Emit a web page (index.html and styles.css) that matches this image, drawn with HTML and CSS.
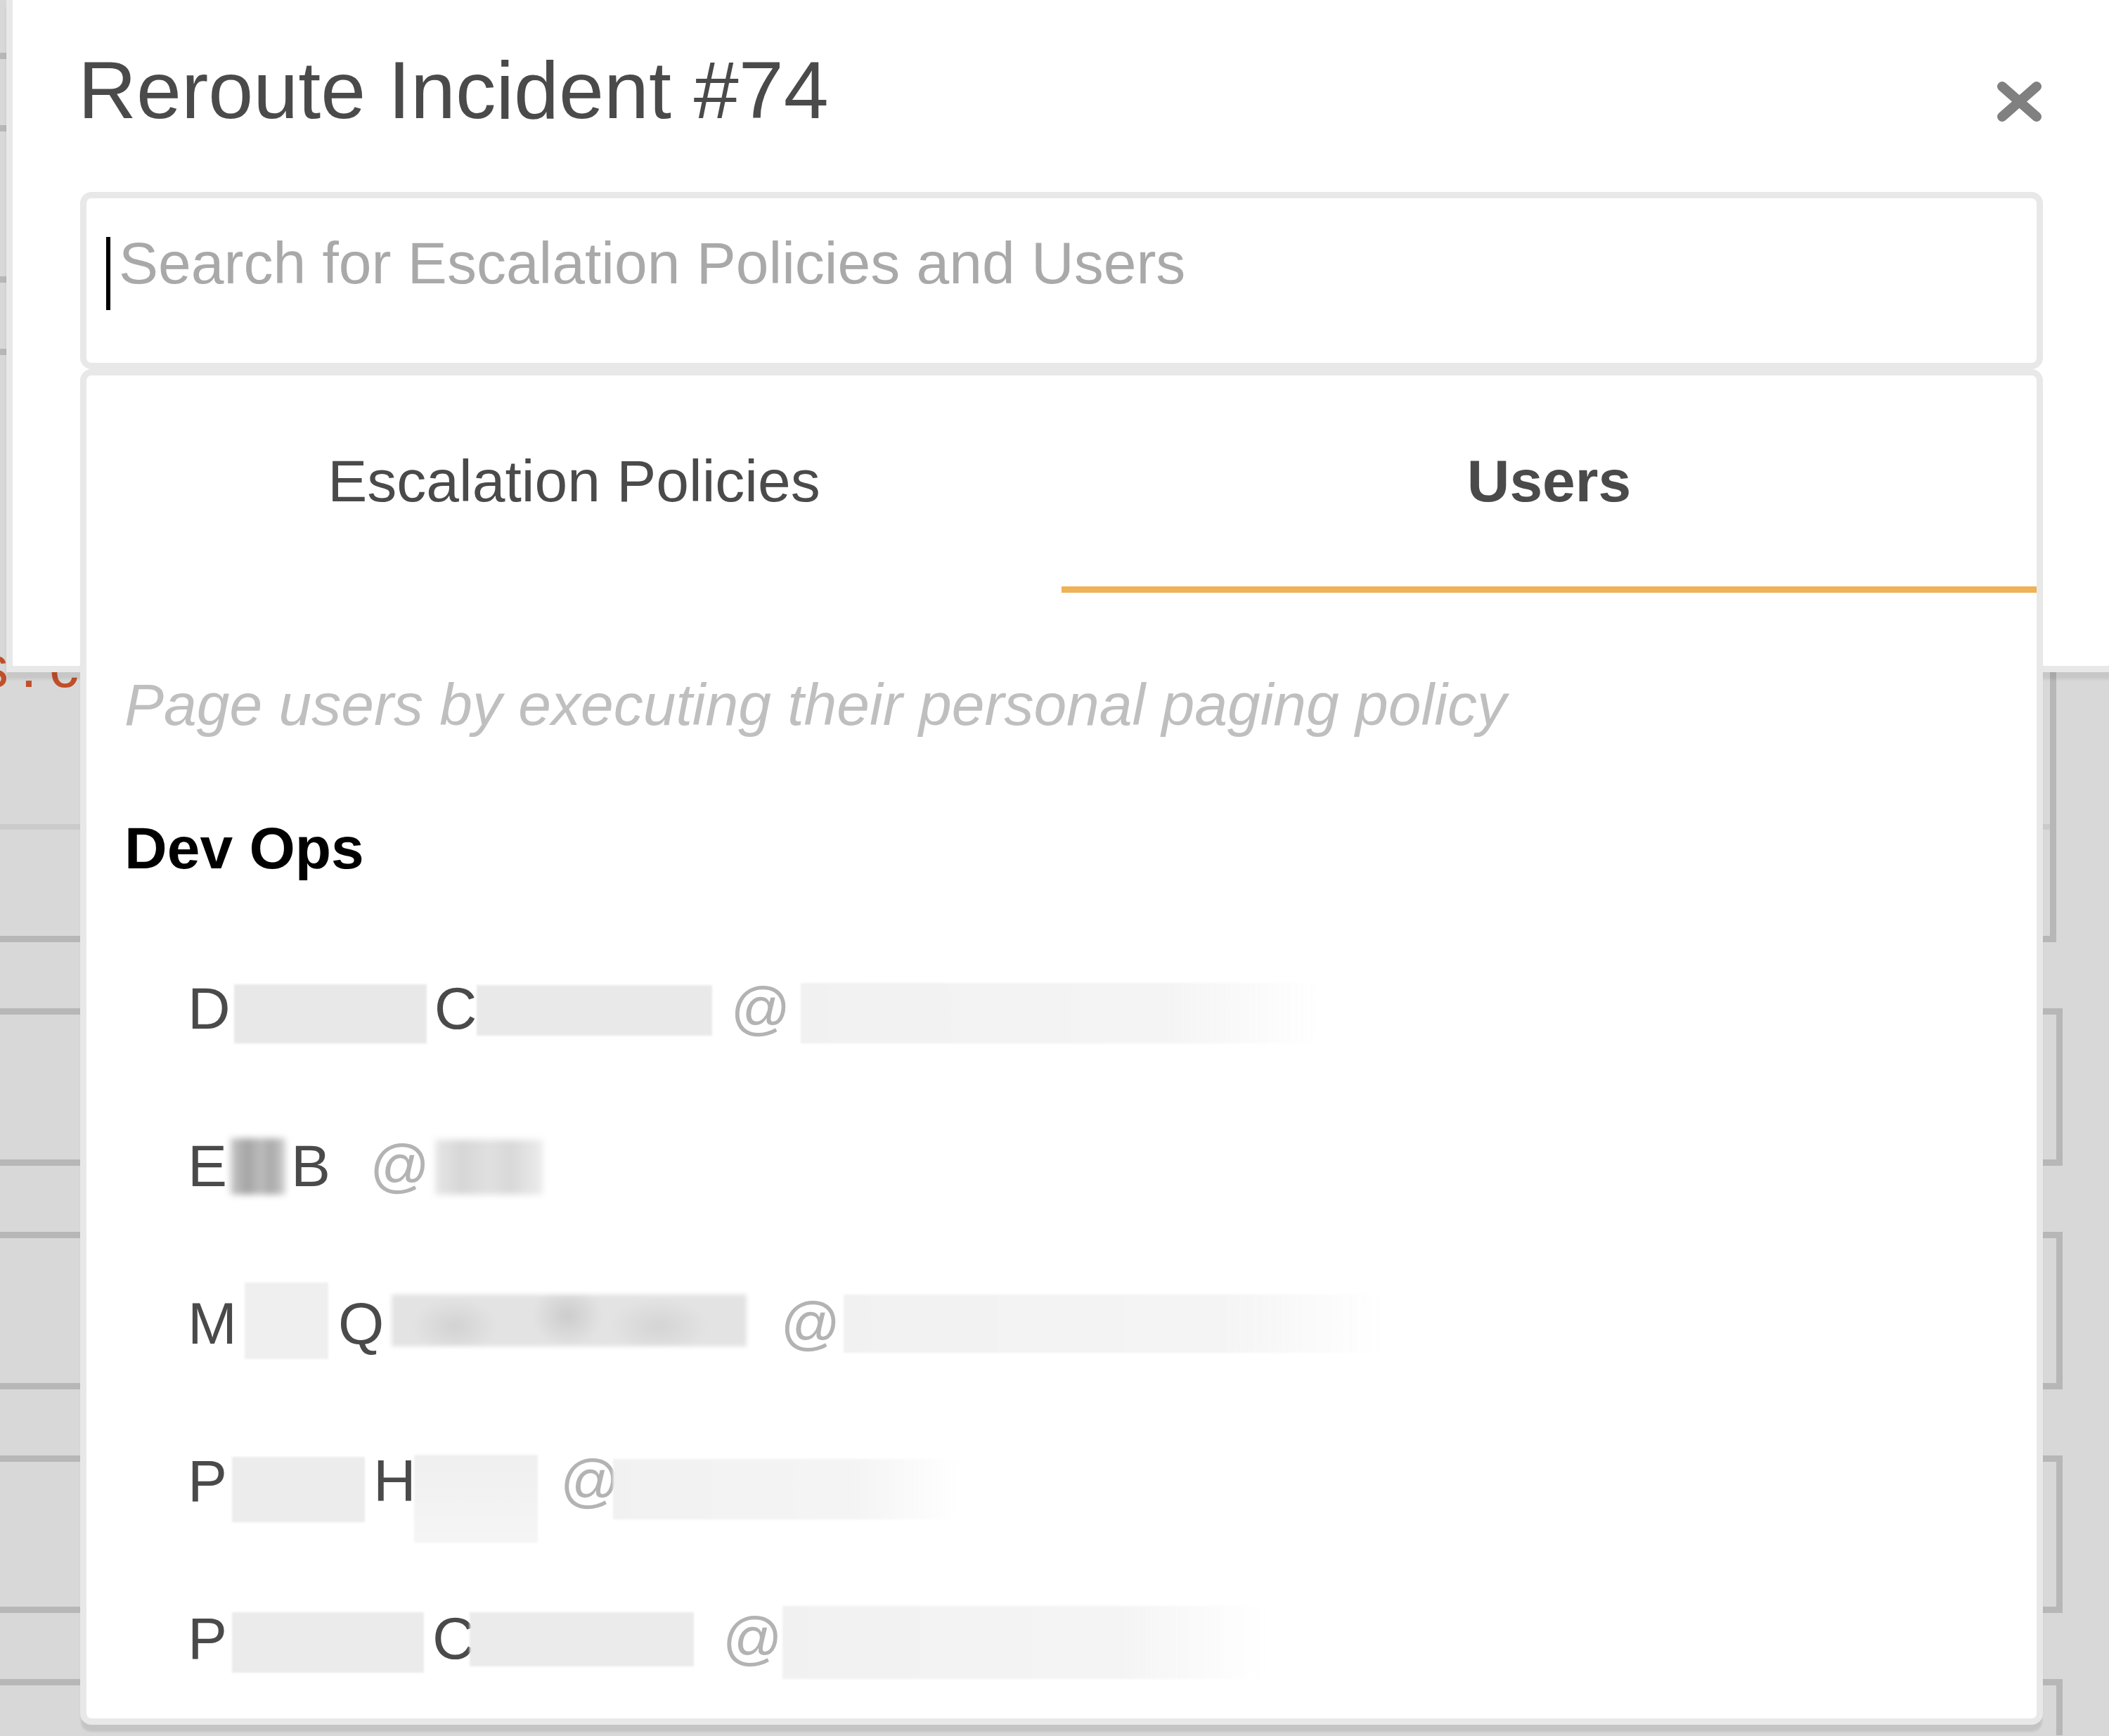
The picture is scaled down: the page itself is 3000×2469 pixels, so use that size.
FILE: index.html
```html
<!DOCTYPE html>
<html lang="en">
<head>
<meta charset="utf-8">
<title>Reroute Incident #74</title>
<link rel="stylesheet" href="styles.css">
</head>
<body>
<div class="bg">
  <div class="card c0"></div>
  <div class="card"></div>
  <div class="card tall">
    <div class="bgtext">s . c</div>
    <div class="divider"></div>
  </div>
  <div class="card"></div>
  <div class="card"></div>
  <div class="card"></div>
  <div class="card last"></div>
</div>

<div class="modal">
  <div class="header">
    <h1 class="title">Reroute Incident #74</h1>
    <svg class="close" width="67" height="59" viewBox="0 0 67 59" aria-label="Close">
      <path d="M9 8 L58 51 M58 8 L9 51" stroke="#808080" stroke-width="14" stroke-linecap="round" fill="none"/>
    </svg>
  </div>
  <div class="search">
    <div class="input"><span class="caret"></span><span class="placeholder">Search for Escalation Policies and Users</span></div>
    <div class="panel">
      <div class="tabs">
        <div class="tab">Escalation Policies</div>
        <div class="tab active">Users</div>
      </div>
      <div class="body">
        <p class="hint">Page users by executing their personal paging policy</p>
        <div class="group">Dev Ops</div>
        <div class="users">
          <div class="user"><span>D</span><span class="mask r1a"></span><span class="l r1c">C</span><span class="mask r1b"></span><span class="at r1at">@</span><span class="mask fade r1e"></span></div>
          <div class="user"><span>E</span><span class="mask smudge r2a"></span><span class="l r2b">B</span><span class="at r2at">@</span><span class="mask smudge light r2e"></span></div>
          <div class="user"><span>M</span><span class="mask r3a"></span><span class="l r3q">Q</span><span class="mask blobs r3b"></span><span class="at r3at">@</span><span class="mask fade r3e"></span></div>
          <div class="user"><span>P</span><span class="mask r4a"></span><span class="l r4h">H</span><span class="mask r4b"></span><span class="at r4at">@</span><span class="mask fade r4e"></span></div>
          <div class="user"><span>P</span><span class="mask r5a"></span><span class="l r5c">C</span><span class="mask r5b"></span><span class="at r5at">@</span><span class="mask fade r5e"></span></div>
        </div>
      </div>
    </div>
  </div>
</div>
</body>
</html>
```

FILE: styles.css
```css
html, body {
  margin: 0;
  padding: 0;
}

body {
  width: 3000px;
  height: 2469px;
  overflow: hidden;
  position: relative;
  background: #d8d8d8;
  font-family: "Liberation Sans", Arial, sans-serif;
}

/* background page rows */
.card {
  box-sizing: border-box;
  width: 2934px;
  height: 224px;
  margin-top: 94px;
  border: 9px solid #b7b7b7;
  border-left: 0;
}

.card.c0 {
  height: 84px;
  margin-top: 0;
  border-top: 0;
}

.card.tall {
  width: 2925px;
  height: 844px;
}

.card.last {
  height: 80px;
  border-bottom: 0;
}

.bgtext {
  margin-top: 396px;
  font-size: 84px;
  line-height: 94px;
  color: #c0502a;
  text-indent: -30px;
  letter-spacing: -3px;
  white-space: pre;
}

.divider {
  margin-top: 177px;
  height: 8px;
  background: #cbcbcb;
}

/* modal */
.modal {
  position: absolute;
  left: 9px;
  top: 0;
  width: 2792px;
  padding: 0 96px 422px 96px;
  background: #fff;
  border-left: 9px solid #e8e8e8;
  border-bottom: 9px solid #e8e8e8;
  box-shadow: 0 10px 4px rgba(0, 0, 0, 0.08);
}

.header {
  height: 273px;
  display: flex;
  justify-content: space-between;
  align-items: flex-start;
}

.title {
  margin: 71px 0 0 -3px;
  font-size: 115px;
  line-height: 115px;
  font-weight: 400;
  color: #4a4a4a;
}

.close {
  margin-top: 115px;
  display: block;
}

.search {
  position: relative;
}

.input {
  box-sizing: border-box;
  height: 252px;
  border: 9px solid #e8e8e8;
  border-radius: 16px;
  padding: 45px 0 0 28px;
  display: flex;
  align-items: flex-start;
}

.caret {
  width: 6px;
  height: 104px;
  background: #000;
  margin: 10px 12px 0 0;
}

.placeholder {
  font-size: 84px;
  line-height: 94px;
  color: #a9a9a9;
}

/* dropdown panel */
.panel {
  position: absolute;
  top: 100%;
  left: 0;
  right: 0;
  height: 1928px;
  box-sizing: border-box;
  border: 9px solid #e8e8e8;
  border-radius: 16px;
  background: #fff;
  box-shadow: 0 11px 3px -1px rgba(0, 0, 0, 0.09);
}

.tabs {
  display: grid;
  grid-template-columns: 1fr 1fr;
}

.tab {
  text-align: center;
  font-size: 84px;
  line-height: 94px;
  padding: 103px 0;
  border-bottom: 9px solid transparent;
  color: #4a4a4a;
}

.tab.active {
  font-weight: 700;
  border-bottom-color: #efb256;
}

.body {
  padding: 112px 0 0 54px;
}

.hint {
  margin: 0 0 110px;
  font-style: italic;
  font-size: 84px;
  line-height: 94px;
  color: #bfbfbf;
}

.group {
  margin: 0 0 69px;
  font-weight: 700;
  font-size: 84px;
  line-height: 94px;
  color: #000;
}

.user {
  height: 224px;
  line-height: 224px;
  font-size: 84px;
  padding-left: 90px;
  color: #4a4a4a;
  white-space: nowrap;
}

.at {
  color: #b3b3b3;
}

.mask {
  display: inline-block;
  background: #e9e9e9;
  filter: blur(1.5px);
}

.mask.fade {
  background: linear-gradient(to right, #f1f1f1 0%, #f4f4f4 70%, rgba(255, 255, 255, 0) 100%);
}

.mask.smudge {
  background: linear-gradient(to right, #c8c8c8 0%, #a4a4a4 30%, #bdbdbd 55%, #a9a9a9 75%, #d2d2d2 100%);
  filter: blur(5px);
}

.mask.smudge.light {
  background: linear-gradient(to right, #e6e6e6 0%, #d6d6d6 25%, #e0e0e0 50%, #d8d8d8 70%, #ececec 100%);
}

.mask.blobs {
  background:
    radial-gradient(ellipse 60px 40px at 90px 45px, #d2d2d2, rgba(210, 210, 210, 0)),
    radial-gradient(ellipse 50px 45px at 250px 30px, #cccccc, rgba(204, 204, 204, 0)),
    radial-gradient(ellipse 70px 40px at 380px 45px, #d4d4d4, rgba(212, 212, 212, 0)),
    #e3e3e3;
  filter: blur(3px);
}

/* row 1 */
.r1a { margin-left: 5px; width: 274px; height: 84px; vertical-align: -21px; background: #e8e8e8; }
.r1c { margin-left: 11px; }
.r1b { width: 335px; height: 72px; vertical-align: -10px; background: #e9e9e9; }
.r1at { margin-left: 26px; }
.r1e { margin-left: 14px; width: 742px; height: 86px; vertical-align: -21px; }

/* row 2 */
.r2a { margin-left: 5px; width: 78px; height: 80px; vertical-align: -12px; }
.r2b { margin-left: 8px; }
.r2at { margin-left: 56px; }
.r2e { margin-left: 8px; width: 153px; height: 78px; vertical-align: -12px; }

/* row 3 */
.r3a { margin-left: 11px; width: 119px; height: 109px; vertical-align: -22px; background: #efefef; }
.r3q { margin-left: 14px; }
.r3b { margin-left: 11px; width: 505px; height: 74px; vertical-align: -4px; }
.r3at { margin-left: 48px; }
.r3e { margin-left: 4px; width: 772px; height: 83px; vertical-align: -13px; }

/* row 4 */
.r4a { margin-left: 7px; width: 189px; height: 93px; vertical-align: -30px; background: #ececec; }
.r4h { margin-left: 12px; }
.r4b { margin-left: -3px; width: 176px; height: 125px; vertical-align: -59px; background: linear-gradient(to bottom, #efefef, #f5f5f5); }
.r4at { margin-left: 32px; }
.r4e { margin-left: -10px; width: 493px; height: 86px; vertical-align: -26px; }

/* row 5 */
.r5a { margin-left: 7px; width: 273px; height: 86px; vertical-align: -20px; background: #ebebeb; }
.r5c { margin-left: 12px; }
.r5b { margin-left: -8px; width: 319px; height: 77px; vertical-align: -11px; background: #ebebeb; }
.r5at { margin-left: 41px; }
.r5e { width: 685px; height: 104px; vertical-align: -29px; }
```
